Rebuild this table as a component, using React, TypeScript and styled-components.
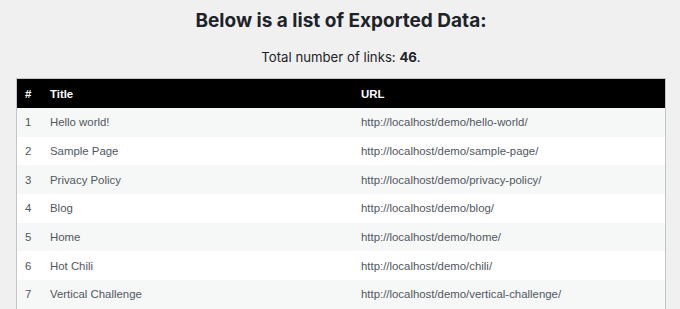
import React from 'react';
import styled, { createGlobalStyle } from 'styled-components';

const GlobalStyle = createGlobalStyle`
  body {
    margin: 0;
    background: #f0f0f1;
    font-family: Inter, "Noto Sans", sans-serif;
    color: #1d2327;
  }
`;

const Page = styled.div`
  padding: 7px 14px 0 16px;
`;

const Heading = styled.h1`
  margin: 0;
  text-align: center;
  font-size: 19px;
  font-weight: 700;
  line-height: 28px;
  color: #1d2327;
`;

const Summary = styled.p`
  margin: 12px 0 11px;
  text-align: center;
  font-size: 13.2px;
  line-height: 20px;
  color: #1d2327;

  strong {
    font-weight: 700;
  }
`;

const Table = styled.table`
  width: 100%;
  border-collapse: collapse;
  border: 1px solid #c3c4c7;
  background: #fff;
  font-family: "Liberation Sans", Arial, sans-serif;
  font-size: 11.4px;
`;

const HeadCell = styled.th<{ width?: string }>`
  background: #000;
  color: #fff;
  text-align: left;
  font-weight: 700;
  height: 29px;
  padding: 0 8px;
  width: ${props => props.width || 'auto'};
`;

const Row = styled.tr<{ striped: boolean }>`
  background: ${props => (props.striped ? '#f6f7f7' : '#fff')};
`;

const Cell = styled.td`
  height: 28.7px;
  padding: 0 8px;
  color: #50575e;
  white-space: nowrap;
`;

const links = [
  { title: 'Hello world!', slug: 'hello-world' },
  { title: 'Sample Page', slug: 'sample-page' },
  { title: 'Privacy Policy', slug: 'privacy-policy' },
  { title: 'Blog', slug: 'blog' },
  { title: 'Home', slug: 'home' },
  { title: 'Hot Chili', slug: 'chili' },
  { title: 'Vertical Challenge', slug: 'vertical-challenge' },
];

export default function App() {
  return (
    <>
      <GlobalStyle />
      <Page>
        <Heading>Below is a list of Exported Data:</Heading>
        <Summary>
          Total number of links: <strong>46</strong>.
        </Summary>
        <Table>
          <thead>
            <tr>
              <HeadCell width="9px">#</HeadCell>
              <HeadCell width="295px">Title</HeadCell>
              <HeadCell>URL</HeadCell>
            </tr>
          </thead>
          <tbody>
            {links.map((link, i) => (
              <Row key={link.slug} striped={i % 2 === 0}>
                <Cell>{i + 1}</Cell>
                <Cell>{link.title}</Cell>
                <Cell>http://localhost/demo/{link.slug}/</Cell>
              </Row>
            ))}
          </tbody>
        </Table>
      </Page>
    </>
  );
}
